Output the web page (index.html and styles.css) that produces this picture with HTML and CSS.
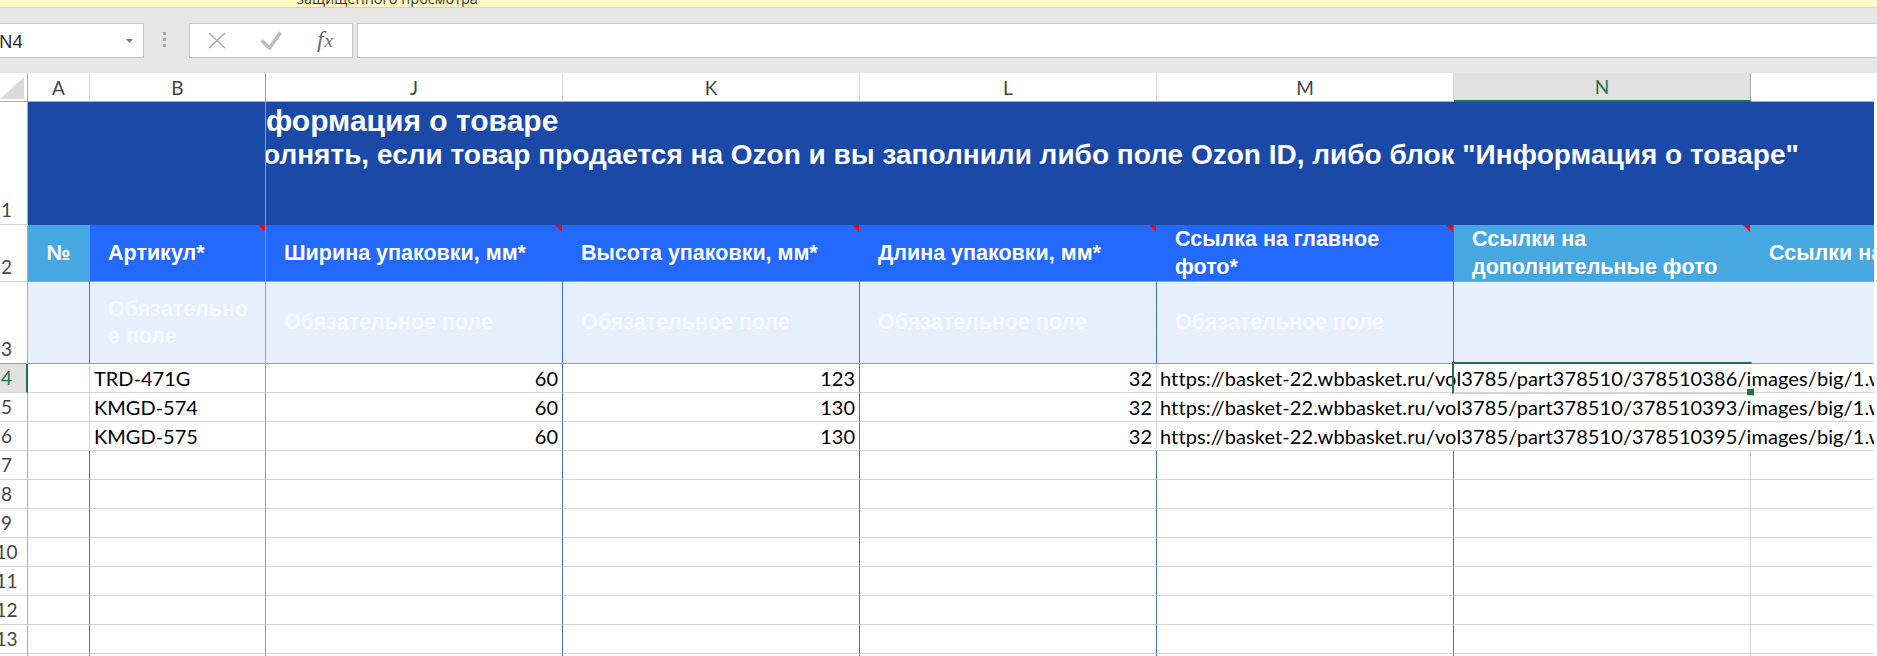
FILE: index.html
```html
<!DOCTYPE html>
<html lang="ru">
<head>
<meta charset="utf-8">
<title>Excel</title>
<link rel="stylesheet" href="styles.css">
</head>
<body>
<div class="msgbar"><span class="msgtext">защищенного просмотра</span></div>
<div class="toolbar">
  <div class="namebox"><span class="nb-text">N4</span><svg class="caret" width="7" height="4" viewBox="0 0 7 4"><path d="M0 0H7L3.5 4Z" fill="#7a7a7a"/></svg></div>
  <div class="grip"><i></i><i></i><i></i></div>
  <div class="fbtns">
    <div class="fslot"><svg width="18" height="17" viewBox="0 0 18 17"><path d="M1 1L17 16M17 1L1 16" stroke="#a9a9a9" stroke-width="1.5" fill="none"/></svg></div>
    <div class="fslot"><svg width="22" height="19" viewBox="0 0 22 19"><path d="M1.5 9.5L9.5 17L20.5 1.5" stroke="#bdbdbd" stroke-width="3.6" fill="none"/></svg></div>
    <div class="fslot"><span class="fx">f<span class="fxx">x</span></span></div>
  </div>
  <div class="finput"></div>
</div>
<div class="sheet">
  <!-- column headers -->
  <div class="ch corner"><svg width="24" height="22" viewBox="0 0 24 22"><path d="M0 22H24V0Z" fill="#dadada"/></svg></div>
  <div class="ch">A</div>
  <div class="ch fzr">B</div>
  <div class="ch">J</div>
  <div class="ch">K</div>
  <div class="ch">L</div>
  <div class="ch">M</div>
  <div class="ch chsel">N</div>
  <div class="ch last"></div>

  <!-- row 1 -->
  <div class="rh"><span>1</span></div>
  <div class="r1 r1a"></div>
  <div class="r1 r1b">
    <div class="tline tline1"><span class="pre"><span>Ин</span></span><span>формация о товаре</span></div>
    <div class="tline tline2"><span class="pre"><span>Зап</span></span><span>олнять, если товар продается на Ozon и вы заполнили либо поле Ozon ID, либо блок "Информация о товаре"</span></div>
  </div>

  <!-- row 2 -->
  <div class="rh"><span>2</span></div>
  <div class="h2 lt hnum">№</div>
  <div class="h2 fzr cm">Артикул*</div>
  <div class="h2 cm">Ширина упаковки, мм*</div>
  <div class="h2 cm">Высота упаковки, мм*</div>
  <div class="h2 cm">Длина упаковки, мм*</div>
  <div class="h2 cm">Ссылка на главное<br>фото*</div>
  <div class="h2 lt cm">Ссылки на<br>дополнительные фото</div>
  <div class="h2 lt">Ссылки на фото 360</div>

  <!-- row 3 -->
  <div class="rh rfz"><span>3</span></div>
  <div class="r3 bl"></div>
  <div class="r3 fzr">Обязательно<br>е поле</div>
  <div class="r3 bl">Обязательное поле</div>
  <div class="r3 bl">Обязательное поле</div>
  <div class="r3 bl">Обязательное поле</div>
  <div class="r3 bl">Обязательное поле</div>
  <div class="r3"></div>
  <div class="r3"></div>

  <!-- row 4 -->
  <div class="rh rsel"><span>4</span></div>
  <div class="d gr"></div>
  <div class="d fzr">TRD-471G</div>
  <div class="d num bl">60</div>
  <div class="d num bl">123</div>
  <div class="d num gr">32</div>
  <div class="d url">https://basket-22.wbbasket.ru/vol3785/part378510/378510386/images/big/1.webp</div>
  <div class="d"></div>
  <div class="d"></div>

  <!-- row 5 -->
  <div class="rh"><span>5</span></div>
  <div class="d gr"></div>
  <div class="d fzr">KMGD-574</div>
  <div class="d num bl">60</div>
  <div class="d num bl">130</div>
  <div class="d num gr">32</div>
  <div class="d url">https://basket-22.wbbasket.ru/vol3785/part378510/378510393/images/big/1.webp</div>
  <div class="d"></div>
  <div class="d"></div>

  <!-- row 6 -->
  <div class="rh"><span>6</span></div>
  <div class="d gr"></div>
  <div class="d fzr">KMGD-575</div>
  <div class="d num bl">60</div>
  <div class="d num bl">130</div>
  <div class="d num gr">32</div>
  <div class="d url">https://basket-22.wbbasket.ru/vol3785/part378510/378510395/images/big/1.webp</div>
  <div class="d"></div>
  <div class="d"></div>

  <!-- rows 7-14 -->
  <div class="rh"><span>7</span></div><div class="d bl"></div><div class="d fzr"></div><div class="d bl"></div><div class="d bl"></div><div class="d bl"></div><div class="d bl"></div><div class="d gr"></div><div class="d"></div>
  <div class="rh"><span>8</span></div><div class="d bl"></div><div class="d fzr"></div><div class="d bl"></div><div class="d bl"></div><div class="d bl"></div><div class="d bl"></div><div class="d gr"></div><div class="d"></div>
  <div class="rh"><span>9</span></div><div class="d bl"></div><div class="d fzr"></div><div class="d bl"></div><div class="d bl"></div><div class="d bl"></div><div class="d bl"></div><div class="d gr"></div><div class="d"></div>
  <div class="rh"><span>10</span></div><div class="d bl"></div><div class="d fzr"></div><div class="d bl"></div><div class="d bl"></div><div class="d bl"></div><div class="d bl"></div><div class="d gr"></div><div class="d"></div>
  <div class="rh"><span>11</span></div><div class="d bl"></div><div class="d fzr"></div><div class="d bl"></div><div class="d bl"></div><div class="d bl"></div><div class="d bl"></div><div class="d gr"></div><div class="d"></div>
  <div class="rh"><span>12</span></div><div class="d bl"></div><div class="d fzr"></div><div class="d bl"></div><div class="d bl"></div><div class="d bl"></div><div class="d bl"></div><div class="d gr"></div><div class="d"></div>
  <div class="rh"><span>13</span></div><div class="d bl"></div><div class="d fzr"></div><div class="d bl"></div><div class="d bl"></div><div class="d bl"></div><div class="d bl"></div><div class="d gr"></div><div class="d"></div>
  <div class="rh"><span>14</span></div><div class="d bl"></div><div class="d fzr"></div><div class="d bl"></div><div class="d bl"></div><div class="d bl"></div><div class="d bl"></div><div class="d gr"></div><div class="d"></div>

  <div class="selbox"></div>
  <div class="handle"></div>
</div>
</body>
</html>
```

FILE: styles.css
```css
* { box-sizing: border-box; }
html, body { margin: 0; padding: 0; }
body {
  width: 1877px;
  height: 656px;
  overflow: hidden;
  background: #ffffff;
  font-family: "Open Sans", "DejaVu Sans", sans-serif;
}

/* message bar */
.msgbar {
  height: 8px;
  background: #fff8c6;
  border-bottom: 1px solid #e3d68a;
  overflow: hidden;
  padding-left: 297px;
}
.msgtext {
  display: block;
  font-size: 14.5px;
  line-height: 15px;
  color: #3a3a3a;
  margin-top: -9px;
  white-space: nowrap;
}

/* formula toolbar */
.toolbar {
  height: 65px;
  background: #e6e6e6;
  display: flex;
  align-items: flex-start;
  padding-top: 15px;
}
.namebox {
  width: 144px;
  height: 35px;
  background: #fff;
  border: 1px solid #c6c6c6;
  border-left: none;
  display: flex;
  align-items: center;
  justify-content: space-between;
  padding-right: 10px;
}
.nb-text {
  font-size: 18px;
  color: #222;
  margin-left: -1px;
}
.caret { display: block; }
.grip {
  width: 3px;
  height: 15px;
  margin: 9px 23px 0 19px;
  display: flex;
  flex-direction: column;
  justify-content: space-between;
}
.grip i {
  display: block;
  width: 3px;
  height: 3px;
  background: #a8a8a8;
}
.fbtns {
  width: 164px;
  height: 35px;
  background: #fff;
  border: 1px solid #c6c6c6;
  display: flex;
}
.fslot {
  width: 54px;
  display: flex;
  align-items: center;
  justify-content: center;
}
.fslot svg { display: block; }
.fx {
  font-family: "Liberation Serif", "DejaVu Serif", serif;
  font-style: italic;
  font-size: 24px;
  line-height: 24px;
  color: #6c6c6c;
  margin-top: -2px;
}
.fxx { font-size: 19px; margin-left: 1px; }
.finput {
  flex: 1;
  height: 35px;
  margin-left: 4px;
  background: #fff;
  border: 1px solid #c6c6c6;
  border-right: none;
}

/* sheet grid */
.sheet {
  position: relative;
  display: grid;
  grid-template-columns: 28px 62px 176px 297px 297px 297px 297px 297px 123px;
  grid-template-rows: 29px 123px 57px 82px repeat(11, 29px);
  width: 1874px;
  height: 583px;
  overflow: hidden;
}
.sheet > div {
  border-right: 1px solid transparent;
  border-bottom: 1px solid #d4d4d4;
  min-width: 0;
}

/* column headers */
.sheet > .ch {
  display: flex;
  align-items: center;
  justify-content: center;
  font-family: "Lato", "Open Sans", sans-serif;
  font-size: 19px;
  color: #444;
  background: #fff;
  border-right: 1px solid #dadada;
  border-bottom: 1px solid #ababab;
}
.sheet > .corner {
  justify-content: flex-start;
  align-items: flex-start;
  padding-top: 4px;
  border-right-color: #ababab;
}
.corner svg { display: block; }
.sheet > .chsel {
  background: #e1e1e1;
  color: #217346;
  border-right-color: #ababab;
  border-bottom: 2px solid #217346;
}
.sheet > .last { border-right-color: transparent; }

/* row headers */
.sheet > .rh {
  display: flex;
  align-items: flex-end;
  padding-bottom: 3px;
  font-family: "Lato", "Open Sans", sans-serif;
  font-size: 19px;
  color: #444;
  background: #fff;
  border-right: 1px solid #ababab;
  overflow: hidden;
}
.rh span {
  flex: none;
  width: 43px;
  margin-left: -15px;
  text-align: center;
}
.sheet > .rfz { border-bottom-color: #9c9c9c; }
.sheet > .rsel {
  background: #e1e1e1;
  color: #217346;
  border-right: 2px solid #217346;
}

/* border helpers */
.sheet > .fzr { border-right-color: #9c9c9c; }
.sheet > .bl { border-right-color: #3e72e6; }
.sheet > .gr { border-right-color: #d4d4d4; }

/* row 1 */
.sheet > .r1 {
  background: #1b49a7;
  border-bottom-color: transparent;
}
.r1a { grid-column: 2 / 4; }
.sheet > .r1a { border-right-color: #9c9c9c; }
.r1b {
  grid-column: 4 / 10;
  overflow: hidden;
  padding-top: 2px;
  font-family: "Liberation Sans", Arial, sans-serif;
  font-weight: bold;
  line-height: 34px;
  color: #fff;
  white-space: nowrap;
}
.tline { display: flex; }
.tline1 { font-size: 30px; }
.tline2 { font-size: 28px; margin-left: -3px; }
.pre {
  flex: none;
  width: 0;
  display: flex;
  justify-content: flex-end;
}

/* row 2 */
.sheet > .h2 {
  position: relative;
  display: flex;
  align-items: center;
  padding-left: 18px;
  background: #2368ff;
  color: #fff;
  font-family: "Liberation Sans", Arial, sans-serif;
  font-weight: bold;
  font-size: 21.5px;
  line-height: 28px;
  white-space: nowrap;
  border-bottom-color: #a6a6a6;
}
.sheet > .lt { background: #47a8e1; }
.sheet > .hnum { justify-content: center; padding-left: 0; }
.cm::after {
  content: "";
  position: absolute;
  top: 0;
  right: 0;
  border-top: 7px solid #ff0000;
  border-left: 7px solid transparent;
}

/* row 3 */
.sheet > .r3 {
  display: flex;
  align-items: center;
  padding-left: 18px;
  background: #e8effc;
  color: #f6f9ff;
  font-family: "Liberation Sans", Arial, sans-serif;
  font-weight: bold;
  font-size: 21.5px;
  line-height: 27px;
  white-space: nowrap;
  border-bottom-color: #9c9c9c;
}

/* data rows */
.sheet > .d {
  display: flex;
  align-items: center;
  padding: 0 4px;
  font-family: "Lato", "Open Sans", sans-serif;
  font-size: 20px;
  color: #000;
  white-space: nowrap;
}
.sheet > .num { justify-content: flex-end; }
.sheet > .url { padding-left: 3px; letter-spacing: 0.1px; }

/* selection overlay */
.selbox {
  position: absolute;
  left: 1452px;
  top: 289px;
  width: 300px;
  height: 32px;
  border: 2px solid #217346;
}
.handle {
  position: absolute;
  left: 1746px;
  top: 315px;
  width: 8px;
  height: 8px;
  background: #217346;
  border: 1px solid #fff;
}
```
